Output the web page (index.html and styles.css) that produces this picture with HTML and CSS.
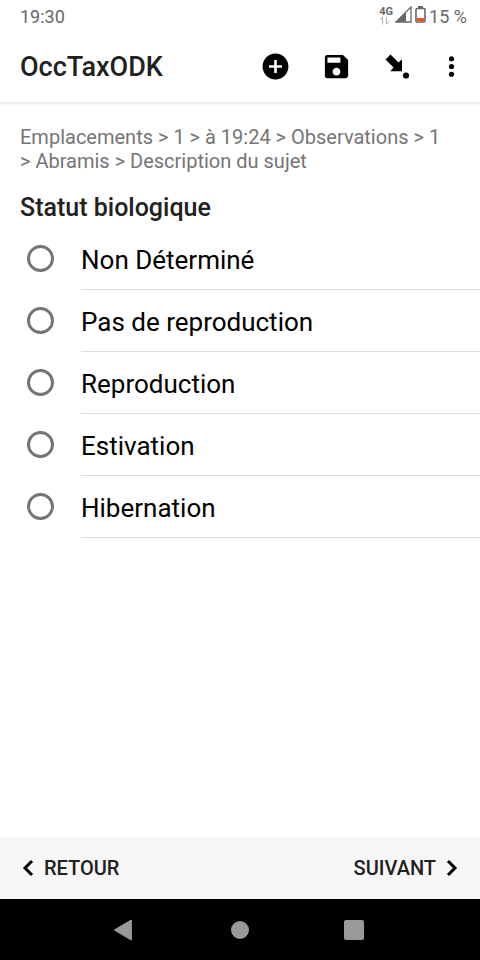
FILE: index.html
```html
<!DOCTYPE html>
<html lang="fr">
<head>
<meta charset="utf-8">
<meta name="viewport" content="width=device-width, initial-scale=1">
<title>OccTaxODK</title>
<link rel="stylesheet" href="styles.css">
</head>
<body>
<div class="status">
  <time>19:30</time>
  <div class="status-icons">
    <div class="network">
      <span>4G</span>
      <svg width="13" height="8" viewBox="0 0 13 8" fill="none" stroke="#aaa" stroke-width="1"><path d="M1 2.500 3.500.5V7.500M7.500 0V7L10 4.500"/></svg>
    </div>
    <svg width="17" height="20" viewBox="0 0 17 20"><path d="M16 1V16H1Z" fill="none" stroke="#686868" stroke-width="1.300"/><path d="M11 6V16H1Z" fill="#686868"/></svg>
    <svg width="13" height="20" viewBox="0 0 13 20"><path d="M4 0h5v2H4z" fill="#686868"/><rect x="2" y="2.500" width="9" height="13.500" rx="1" fill="#fff" stroke="#686868" stroke-width="1.600"/><path d="M3 12h7v3H3z" fill="#f4511e"/></svg>
    <span>15 %</span>
  </div>
</div>
<header class="appbar">
  <h1>OccTaxODK</h1>
  <div class="actions">
    <button type="button" aria-label="Ajouter"><svg class="icon" viewBox="0 0 24 24"><path d="M12 2C6.480 2 2 6.480 2 12s4.480 10 10 10 10-4.480 10-10S17.520 2 12 2zm5 11h-4v4h-2v-4H7v-2h4V7h2v4h4v2z"/></svg></button>
    <button type="button" aria-label="Enregistrer"><svg class="icon" viewBox="0 0 24 24"><path d="M17 3H5a2 2 0 0 0-2 2v14a2 2 0 0 0 2 2h14c1.100 0 2-.900 2-2V7l-4-4zm-5 16c-1.660 0-3-1.340-3-3s1.340-3 3-3 3 1.340 3 3-1.340 3-3 3zm3-10H5V5h10v4z"/></svg></button>
    <button type="button" aria-label="Aller à"><svg class="icon" viewBox="0 0 31 31"><path d="M3.500 8.500 8.500 3.500l8 8 3.500-3.300v12H8.300l3.200-3.700z"/><circle cx="24" cy="24.500" r="3.100"/></svg></button>
    <button type="button" class="more" aria-label="Plus d’options"><svg class="icon" viewBox="0 0 24 24"><circle cx="12" cy="6" r="2"/><circle cx="12" cy="12" r="2"/><circle cx="12" cy="18" r="2"/></svg></button>
  </div>
</header>
<main>
  <p class="path">Emplacements &gt; 1 &gt; à 19:24 &gt; Observations &gt; 1 &gt; Abramis &gt; Description du sujet</p>
  <fieldset>
    <legend>Statut biologique</legend>
    <label class="option"><input type="radio" name="statut"><span>Non Déterminé</span></label>
    <label class="option"><input type="radio" name="statut"><span>Pas de reproduction</span></label>
    <label class="option"><input type="radio" name="statut"><span>Reproduction</span></label>
    <label class="option"><input type="radio" name="statut"><span>Estivation</span></label>
    <label class="option"><input type="radio" name="statut"><span>Hibernation</span></label>
  </fieldset>
</main>
<footer class="pager">
  <button type="button"><svg width="12" height="18" viewBox="0 0 12 18"><path d="M10 2 3 9l7 7"/></svg>RETOUR</button>
  <button type="button">SUIVANT<svg width="12" height="18" viewBox="0 0 12 18"><path d="m2 2 7 7-7 7"/></svg></button>
</footer>
<nav class="system" aria-label="Système">
  <button type="button" aria-label="Précédent"><svg width="24" height="22" viewBox="0 0 24 22"><path d="M17.200 1.500V20.500L1 11Z" stroke="#999" stroke-width="1.500" stroke-linejoin="round"/></svg></button>
  <button type="button" aria-label="Accueil"><svg width="22" height="22" viewBox="0 0 22 22"><circle cx="11" cy="11" r="9"/></svg></button>
  <button type="button" aria-label="Applications récentes"><svg width="22" height="22" viewBox="0 0 22 22"><rect x="1" y="1" width="20" height="20" rx="2"/></svg></button>
</nav>
</body>
</html>
```
FILE: styles.css
```css
* {
  box-sizing: border-box;
}

body {
  margin: 0;
  min-height: 100vh;
  display: flex;
  flex-direction: column;
  background: #fff;
  color: #212121;
  font-family: Roboto, sans-serif;
}

button {
  display: flex;
  align-items: center;
  justify-content: center;
  padding: 0;
  border: 0;
  background: none;
  color: inherit;
  font: inherit;
}

.status {
  display: flex;
  justify-content: space-between;
  height: 32px;
  padding: 0 13px 0 20px;
  align-items: center;
  color: #686868;
  font-size: 18px;
}

.status-icons {
  display: flex;
  align-items: center;
  gap: 2px;
}

.network {
  display: flex;
  flex-direction: column;
  font-size: 11px;
  font-weight: 700;
  line-height: 10px;
}

.appbar {
  display: flex;
  align-items: center;
  justify-content: space-between;
  height: 70px;
  padding: 0 6px 2px 20px;
  box-shadow: 0 2px 3px rgba(0, 0, 0, 0.1);
}

h1 {
  margin: 0;
  padding-top: 2px;
  font-size: 27px;
  font-weight: 500;
}

.actions {
  display: flex;
}

.actions button {
  width: 61px;
  height: 61px;
}

.actions .more {
  width: 46px;
}

.icon {
  width: 31px;
  height: 31px;
}

main {
  flex: 1;
  padding-top: 23px;
}

.path {
  margin: 0;
  padding: 0 32px 0 20px;
  color: #757575;
  font-size: 20px;
  line-height: 24px;
}

fieldset {
  margin: 0;
  padding: 0;
  border: 0;
}

legend {
  padding: 19px 20px 4px;
  font-size: 25px;
  font-weight: 500;
  line-height: 32px;
}

.option {
  display: flex;
  align-items: center;
  height: 62px;
  padding-left: 27px;
  color: #000;
  font-size: 26px;
}

.option input {
  appearance: none;
  flex: none;
  width: 27px;
  height: 27px;
  margin: 0 27px 2px 0;
  border: 3px solid #757575;
  border-radius: 50%;
}

.option input:checked {
  background: radial-gradient(#757575 50%, transparent 55%);
}

.option span {
  flex: 1;
  padding-top: 3px;
  border-bottom: 1px solid #dcdcdc;
  line-height: 58px;
}

.pager {
  display: flex;
  justify-content: space-between;
  height: 62px;
  padding: 0 22px;
  background: #f7f7f7;
  font-size: 20px;
  font-weight: 500;
}

.pager button {
  gap: 10px;
}

.pager svg {
  fill: none;
  stroke: #000;
  stroke-width: 3;
}

.system {
  display: flex;
  justify-content: center;
  gap: 38px;
  height: 61px;
  background: #000;
}

.system button {
  width: 76px;
}

.system svg {
  fill: #999;
}
```
